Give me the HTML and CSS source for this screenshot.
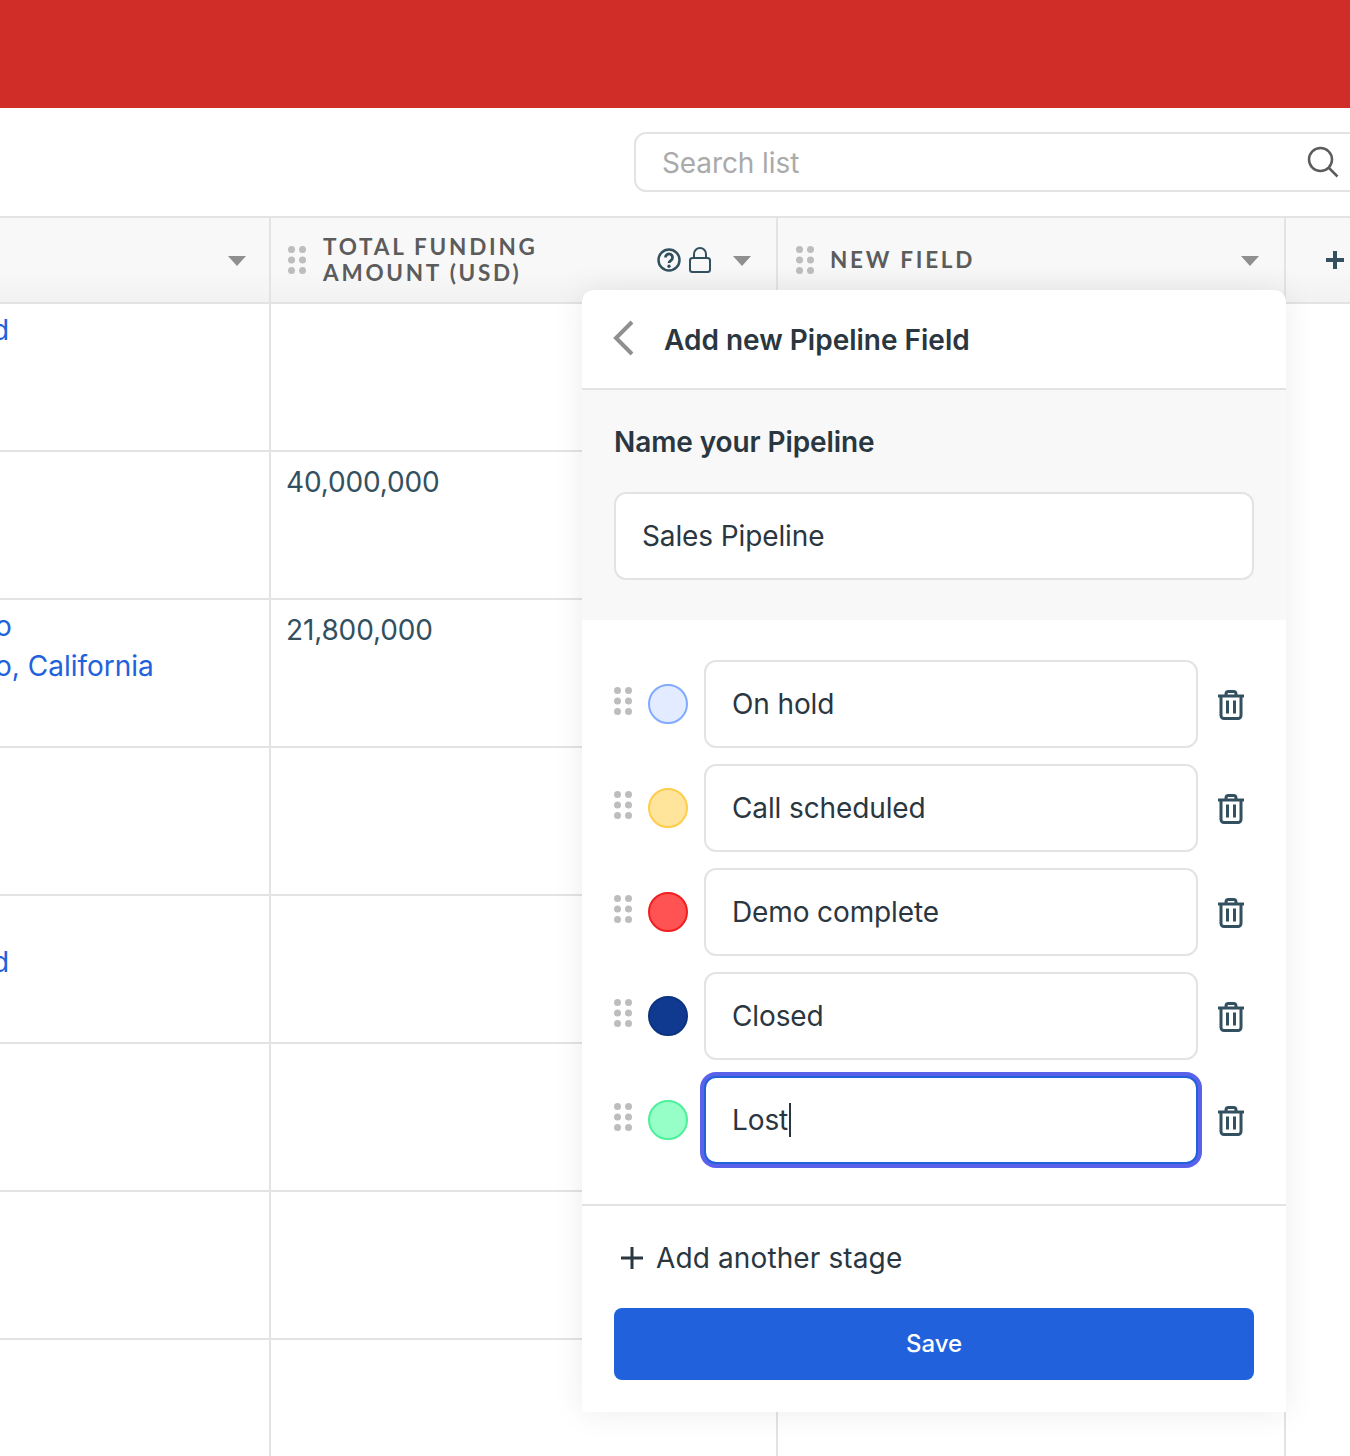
FILE: index.html
```html
<!DOCTYPE html>
<html lang="en">
<head>
<meta charset="utf-8">
<title>Add new Pipeline Field</title>
<link rel="stylesheet" href="styles.css">
</head>
<body>
<svg class="defs" width="0" height="0" aria-hidden="true">
  <symbol id="grip" viewBox="0 0 20 30"><g fill="#bdbdbd"><circle cx="4.500" cy="4.500" r="3.500"/><circle cx="15.500" cy="4.500" r="3.500"/><circle cx="4.500" cy="15" r="3.500"/><circle cx="15.500" cy="15" r="3.500"/><circle cx="4.500" cy="25.500" r="3.500"/><circle cx="15.500" cy="25.500" r="3.500"/></g></symbol>
  <symbol id="caret" viewBox="0 0 18 10"><path d="M0 0h18l-9 10z" fill="#8f8f8f"/></symbol>
  <symbol id="trash" viewBox="0 0 26 30"><g fill="none" stroke="#33505f" stroke-width="3"><path d="M0 6h26"/><path d="M8 5.500V4a2.500 2.500 0 0 1 2.500-2.500h5A2.500 2.500 0 0 1 18 4v1.500"/><path d="M3 6v19.500a3 3 0 0 0 3 3h14a3 3 0 0 0 3-3V6"/><path d="M9.500 10.500v13M16.500 10.500v13"/></g></symbol>
</svg>

<header class="topbar"></header>

<section class="toolbar">
  <div class="search">
    <span class="search-text">Search list</span>
    <svg class="search-icon" viewBox="0 0 32 32"><circle cx="13.500" cy="13.500" r="11.500" fill="none" stroke="#5c5c5c" stroke-width="2.500"/><path d="M22 22l8.500 8.500" stroke="#5c5c5c" stroke-width="2.500" fill="none"/></svg>
  </div>
</section>

<main class="table">
  <div class="head col-a"><svg class="caret"><use href="#caret"/></svg></div>
  <div class="head col-b col-first">
    <svg class="grip"><use href="#grip"/></svg>
    <span class="label">TOTAL FUNDING<br>AMOUNT (USD)</span>
    <svg class="help" viewBox="0 0 24 24"><circle cx="12" cy="12" r="10.500" fill="none" stroke="#33505f" stroke-width="2.500"/><path d="M8.500 9.500a3.500 3.500 0 1 1 5.500 2.800c-1.300.9-2 1.500-2 2.700" fill="none" stroke="#33505f" stroke-width="2.800"/><circle cx="12" cy="18.300" r="1.700" fill="#33505f"/></svg>
    <svg class="lock" viewBox="0 0 22 26"><path d="M5 11V7a6 6 0 0 1 12 0v4" fill="none" stroke="#33505f" stroke-width="2"/><rect x="1" y="11" width="20" height="14" rx="2.500" fill="none" stroke="#33505f" stroke-width="2"/></svg>
    <svg class="caret"><use href="#caret"/></svg>
  </div>
  <div class="head col-b">
    <svg class="grip"><use href="#grip"/></svg>
    <span class="label">NEW FIELD</span>
    <svg class="caret"><use href="#caret"/></svg>
  </div>
  <div class="head col-d">
    <svg class="plus" viewBox="0 0 18 18"><path d="M9 0v18M0 9h18" stroke="#33505f" stroke-width="4"/></svg>
  </div>

  <div class="cell col-a"><a class="link clip-d">d</a></div><div class="cell col-b"></div><div class="cell col-b"></div><div class="cell col-d"></div>
  <div class="cell col-a"></div><div class="cell col-b num">40,000,000</div><div class="cell col-b"></div><div class="cell col-d"></div>
  <div class="cell col-a"><a class="link clip-o">o</a><a class="link clip-o">o, California</a></div><div class="cell col-b num">21,800,000</div><div class="cell col-b"></div><div class="cell col-d"></div>
  <div class="cell col-a"></div><div class="cell col-b"></div><div class="cell col-b"></div><div class="cell col-d"></div>
  <div class="cell col-a"><a class="link clip-d second-line">d</a></div><div class="cell col-b"></div><div class="cell col-b"></div><div class="cell col-d"></div>
  <div class="cell col-a"></div><div class="cell col-b"></div><div class="cell col-b"></div><div class="cell col-d"></div>
  <div class="cell col-a"></div><div class="cell col-b"></div><div class="cell col-b"></div><div class="cell col-d"></div>
  <div class="cell col-a"></div><div class="cell col-b"></div><div class="cell col-b"></div><div class="cell col-d"></div>
</main>

<aside class="panel">
  <div class="panel-head">
    <svg class="back" viewBox="0 0 22 36"><path d="M20 2L4 18l16 16" fill="none" stroke="#8f8f8f" stroke-width="4"/></svg>
    <h2 class="panel-title">Add new Pipeline Field</h2>
  </div>
  <div class="name-section">
    <h3 class="name-title">Name your Pipeline</h3>
    <div class="field">Sales Pipeline</div>
  </div>
  <div class="stages">
    <div class="stage">
      <svg class="grip"><use href="#grip"/></svg>
      <span class="dot dot-blue"></span>
      <div class="field">On hold</div>
      <svg class="trash"><use href="#trash"/></svg>
    </div>
    <div class="stage">
      <svg class="grip"><use href="#grip"/></svg>
      <span class="dot dot-yellow"></span>
      <div class="field">Call scheduled</div>
      <svg class="trash"><use href="#trash"/></svg>
    </div>
    <div class="stage">
      <svg class="grip"><use href="#grip"/></svg>
      <span class="dot dot-red"></span>
      <div class="field">Demo complete</div>
      <svg class="trash"><use href="#trash"/></svg>
    </div>
    <div class="stage">
      <svg class="grip"><use href="#grip"/></svg>
      <span class="dot dot-navy"></span>
      <div class="field">Closed</div>
      <svg class="trash"><use href="#trash"/></svg>
    </div>
    <div class="stage">
      <svg class="grip"><use href="#grip"/></svg>
      <span class="dot dot-green"></span>
      <div class="field field-focus">Lost<span class="cursor"></span></div>
      <svg class="trash"><use href="#trash"/></svg>
    </div>
  </div>
  <div class="panel-foot">
    <div class="add-stage">
      <svg class="add-plus" viewBox="0 0 22 22"><path d="M11 0v22M0 11h22" stroke="#2a3640" stroke-width="3"/></svg>
      <span>Add another stage</span>
    </div>
    <button class="save" type="button">Save</button>
  </div>
</aside>
</body>
</html>
```

FILE: styles.css
```css
* { box-sizing: border-box; }
html, body { margin: 0; height: 1456px; overflow: hidden; background: #fff; }
body { position: relative; font-family: Inter, "Liberation Sans", sans-serif; color: #2a3640; }
.defs { position: absolute; }

.topbar { height: 108px; background: #d12d28; }

.toolbar { height: 108px; padding: 24px 0 0 634px; overflow: hidden; }
.search {
  width: 730px; height: 60px; display: flex; align-items: center; justify-content: space-between;
  padding: 2px 22px 0 26px; border: 2px solid #e3e3e3; border-radius: 12px;
}
.search-text { font-size: 28px; color: #aaa; letter-spacing: -.1px; }
.search-icon { width: 32px; height: 32px; margin: -2px 1px 0 0; }

.table { display: grid; grid-template-columns: 271px 507px 508px 1fr; grid-template-rows: 88px repeat(8, 148px); }
.head {
  display: flex; align-items: center; padding: 0 25px 0 17px;
  background: linear-gradient(#f8f8f8 60%, #f2f2f2);
  border-top: 2px solid #e3e3e3; border-bottom: 2px solid #e3e3e3; border-right: 2px solid #e3e3e3;
}
.head.col-first { padding-left: 16px; }
.head.col-first .label { margin-left: 16px; }
.head.col-d { border-right: 0; padding: 0 0 0 40px; }
.head.col-a { justify-content: flex-end; padding-right: 23px; }
.grip { width: 20px; height: 30px; flex: none; }
.label {
  flex: 1; margin: -1px 0 0 15px; font-family: Lato, "Liberation Sans", sans-serif; font-weight: 700;
  font-size: 22.5px; line-height: 26px; letter-spacing: 2.75px; color: #5c5c5c;
}
.caret { width: 18px; height: 10px; flex: none; margin-top: 1px; }
.help { width: 24px; height: 24px; margin-right: 8px; flex: none; }
.lock { width: 22px; height: 26px; margin-right: 22px; flex: none; }
.plus { width: 18px; height: 18px; }

.cell { border-bottom: 2px solid #e3e3e3; border-right: 2px solid #e3e3e3; font-size: 28px; line-height: 39px; overflow: hidden; }
.cell.col-d { border: 0; }
.cell.num { padding: 11px 0 0 15px; color: #33505f; letter-spacing: -.15px; }
.cell.col-a { padding-top: 7px; }
.link { display: block; color: #2162dc; white-space: nowrap; }
.clip-d { margin-left: -8px; }
.clip-o { margin-left: -5px; }
.clip-o + .clip-o { margin-top: 1px; }
.second-line { margin-top: 40px; }

.panel {
  position: absolute; left: 582px; top: 290px; width: 704px; height: 1122px;
  background: #fff; border-radius: 12px 12px 0 0; box-shadow: 0 0 32px rgba(0, 0, 0, .08);
  display: flex; flex-direction: column;
}
.panel-head { height: 100px; display: flex; align-items: center; padding: 2px 0 0 30px; border-bottom: 2px solid #e3e3e3; }
.back { width: 22px; height: 36px; margin: -4px 30px 0 0; }
.panel-title { margin: 0; font-size: 28px; font-weight: 600; line-height: 38px; color: #2a3640; }
.name-section { height: 230px; padding: 32px 32px 0; background: #f8f8f8; }
.name-title { margin: 0 0 30px; font-size: 28px; font-weight: 600; line-height: 40px; letter-spacing: -.1px; color: #2a3640; }
.field {
  height: 88px; flex: 1; display: flex; align-items: center; padding: 0 26px; background: #fff;
  border: 2px solid #e3e3e3; border-radius: 12px; font-size: 28px; letter-spacing: -.12px; color: #2a3640;
}
.stages { height: 586px; padding: 40px 32px 0; display: flex; flex-direction: column; gap: 16px; border-bottom: 2px solid #e3e3e3; }
.stage { display: flex; align-items: center; height: 88px; padding-right: 10px; }
.stage .grip { margin: -6px 0 0 -1px; }
.dot { width: 40px; height: 40px; border-radius: 50%; margin: 0 16px 0 15px; border: 2px solid; flex: none; }
.dot-blue { background: #e2ebff; border-color: #80abff; }
.dot-yellow { background: #ffe49c; border-color: #ffcd4a; }
.dot-red { background: #ff5252; border-color: #f02020; }
.dot-navy { background: #0f3a8f; border-color: #0d3480; }
.dot-green { background: #96ffc8; border-color: #4cf09a; }
.trash { width: 26px; height: 30px; margin: 2px 0 0 20px; flex: none; }
.field-focus { border-color: #2162dc; box-shadow: 0 0 0 4px #5a62ea; }
.cursor { width: 2px; height: 34px; background: #2a3640; margin-left: 1px; }
.panel-foot { padding: 0 32px; }
.add-stage { height: 102px; display: flex; align-items: center; gap: 13px; padding: 2px 0 0 7px; font-size: 28px; letter-spacing: .12px; color: #2a3640; }
.add-plus { width: 22px; height: 22px; }
.save {
  display: block; width: 100%; height: 72px; padding: 0 0 2px; border: 0; border-radius: 8px; background: #2162dc;
  color: #fff; font: 500 24px Inter, "Liberation Sans", sans-serif;
}
```
